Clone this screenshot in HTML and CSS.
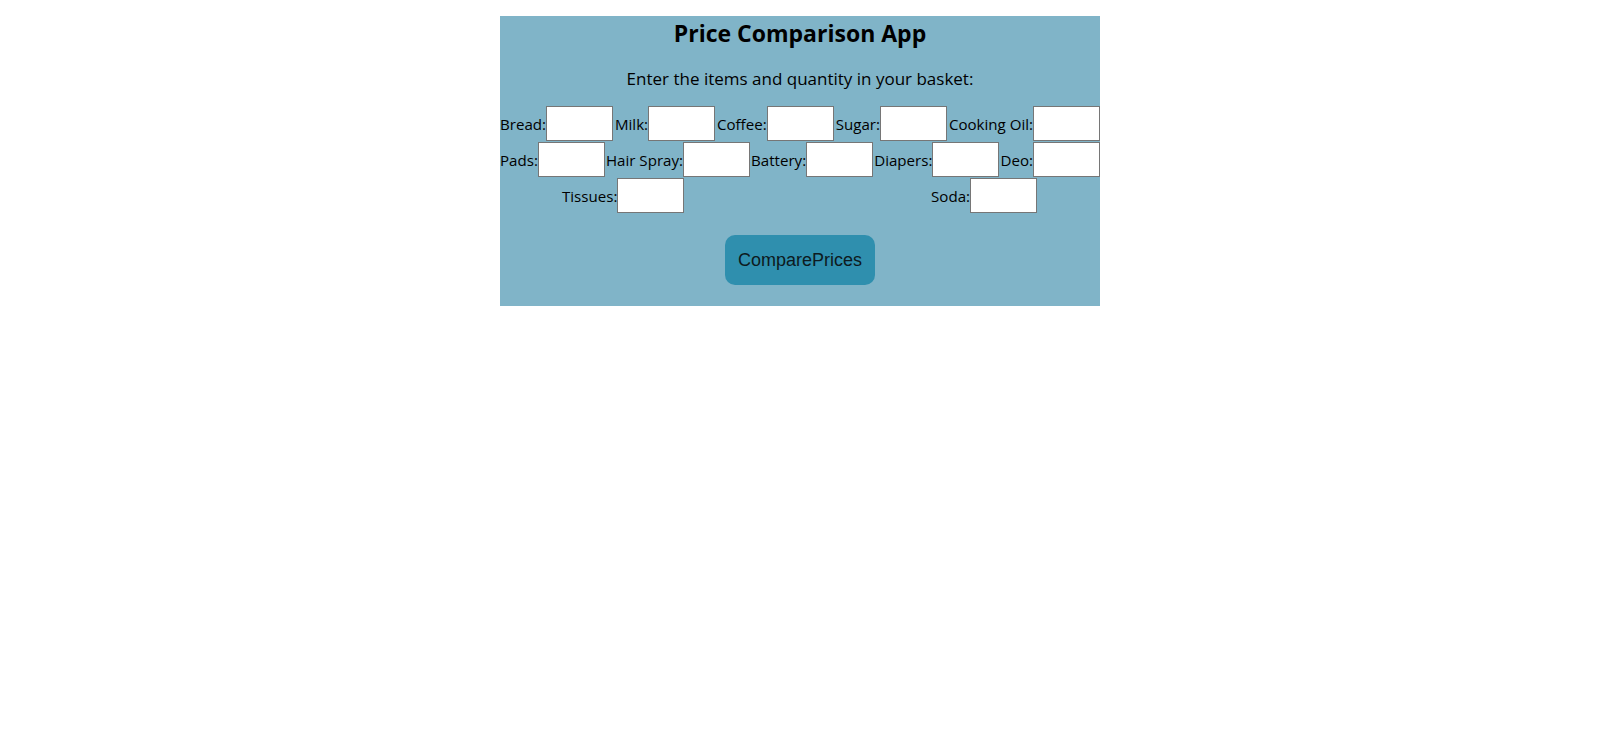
FILE: index.html
```html
<!DOCTYPE html>
<html lang="en">
<head>
<meta charset="utf-8">
<title>Price Comparison App</title>
<link rel="stylesheet" href="styles.css">
</head>
<body>
<main class="app">
  <h2 class="title">Price Comparison App</h2>
  <p class="intro">Enter the items and quantity in your basket:</p>
  <div class="items">
    <div class="row">
      <label class="item">Bread:<input class="qty" type="text"></label>
      <label class="item">Milk:<input class="qty" type="text"></label>
      <label class="item">Coffee:<input class="qty" type="text"></label>
      <label class="item">Sugar:<input class="qty" type="text"></label>
      <label class="item">Cooking Oil:<input class="qty" type="text"></label>
    </div>
    <div class="row">
      <label class="item">Pads:<input class="qty" type="text"></label>
      <label class="item">Hair Spray:<input class="qty" type="text"></label>
      <label class="item">Battery:<input class="qty" type="text"></label>
      <label class="item">Diapers:<input class="qty" type="text"></label>
      <label class="item">Deo:<input class="qty" type="text"></label>
    </div>
    <div class="row row-last">
      <label class="item">Tissues:<input class="qty" type="text"></label>
      <label class="item">Soda:<input class="qty" type="text"></label>
    </div>
  </div>
  <button class="compare" type="button">ComparePrices</button>
</main>
</body>
</html>
```
FILE: styles.css
```css
html, body {
  margin: 0;
  padding: 0;
  background: #ffffff;
}

body {
  padding-top: 16px;
  font-family: "Open Sans", "Noto Sans", sans-serif;
  color: #000;
}

.app {
  width: 600px;
  margin: 0 auto;
  background: #80b4c8;
  display: flex;
  flex-direction: column;
  align-items: center;
  padding-bottom: 21px;
}

.title {
  margin: 0;
  font-size: 23px;
  line-height: 34px;
  font-weight: 700;
}

.intro {
  margin: 17px 0 0;
  font-size: 17px;
  line-height: 24px;
}

.items {
  align-self: stretch;
  display: flex;
  flex-direction: column;
  gap: 1px;
  margin-top: 15px;
}

.row {
  display: flex;
  justify-content: space-between;
  align-items: center;
}

.row-last {
  padding: 0 63px 0 62px;
}

.item {
  display: flex;
  align-items: center;
  flex-shrink: 0;
  white-space: nowrap;
  font-size: 15.1px;
  line-height: 20px;
  padding-top: 1px;
}

.qty {
  box-sizing: border-box;
  flex-shrink: 0;
  width: 67px;
  height: 35px;
  margin: -1px 0 0;
  padding: 0 4px;
  border: 1px solid #767676;
  background: #fff;
  font: inherit;
}

.compare {
  margin-top: 22px;
  padding: 14px 13px;
  border: none;
  border-radius: 10px;
  background: #2f8fae;
  color: #0d1a20;
  font-family: "Liberation Sans", Arial, sans-serif;
  font-size: 18px;
  line-height: 22px;
}
```
